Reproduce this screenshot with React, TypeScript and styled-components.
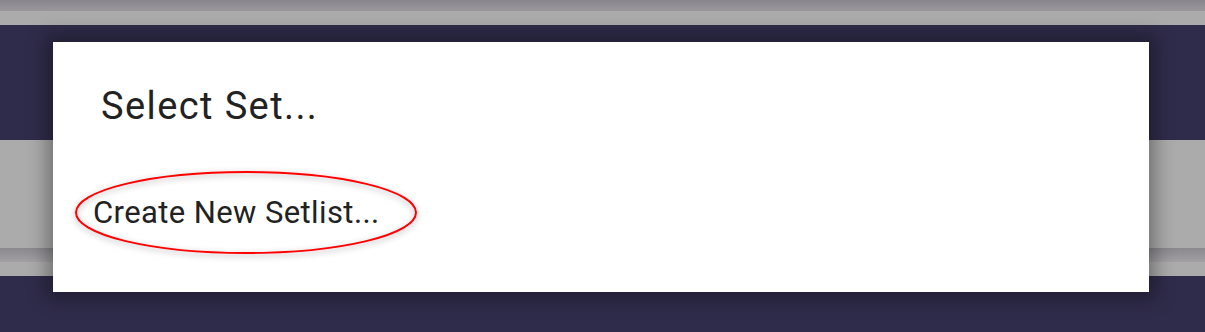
import React from 'react';
import styled, { createGlobalStyle } from 'styled-components';

const GlobalStyle = createGlobalStyle`
  html, body {
    margin: 0;
    padding: 0;
    width: 1205px;
    height: 332px;
    overflow: hidden;
    font-family: Roboto, "Noto Sans", sans-serif;
  }
`;

// Backdrop: the app behind the dialog, dimmed
const Screen = styled.div`
  position: relative;
  width: 1205px;
  height: 332px;
  display: flex;
  flex-direction: column;
  background: #2f2b4a;
`;

const Band = styled.div<{ $h: number; $bg: string }>`
  height: ${(p) => p.$h}px;
  flex: none;
  background: ${(p) => p.$bg};
`;

const Overlay = styled.div`
  position: absolute;
  inset: 0;
  padding: 42px 56px 40px 53px;
  display: flex;
`;

const Dialog = styled.div`
  flex: 1;
  background: #ffffff;
  box-shadow: 0 0 18px 6px rgba(0, 0, 0, 0.35);
  display: flex;
  flex-direction: column;
  padding: 42px 0 0 48px;
`;

const Title = styled.h2`
  margin: 0;
  font-weight: 400;
  font-size: 38px;
  line-height: 44px;
  letter-spacing: 1.4px;
  color: #222222;
`;

const Option = styled.div`
  position: relative;
  margin: 65px 0 0 -8px;
  font-size: 31px;
  line-height: 40px;
  letter-spacing: 0.4px;
  color: #222222;
  align-self: flex-start;
`;

const Ring = styled.svg`
  position: absolute;
  left: -18px;
  top: -22px;
  overflow: visible;
  pointer-events: none;
`;

const App: React.FC = () => {
  return (
    <>
      <GlobalStyle />
      <Screen>
        <Band $h={11} $bg="linear-gradient(#87848b, #9a989d)" />
        <Band $h={14} $bg="#ababab" />
        <Band $h={115} $bg="#2f2b4a" />
        <Band $h={108} $bg="#ababab" />
        <Band $h={14} $bg="linear-gradient(#8a878d, #a2a0a4)" />
        <Band $h={14} $bg="#ababab" />
        <Band $h={56} $bg="#2f2b4a" />
        <Overlay>
          <Dialog>
            <Title>Select Set...</Title>
            <Option>
              Create New Setlist...
              <Ring width="342" height="83" viewBox="0 0 342 83">
                <defs>
                  <filter id="sh" x="-20%" y="-40%" width="140%" height="180%">
                    <feDropShadow dx="0" dy="2" stdDeviation="3" floodColor="#000" floodOpacity="0.35" />
                  </filter>
                </defs>
                <ellipse cx="171" cy="41.5" rx="170" ry="40.5" fill="none" stroke="#ff0000" strokeWidth="2" filter="url(#sh)" />
              </Ring>
            </Option>
          </Dialog>
        </Overlay>
      </Screen>
    </>
  );
};

export default App;
